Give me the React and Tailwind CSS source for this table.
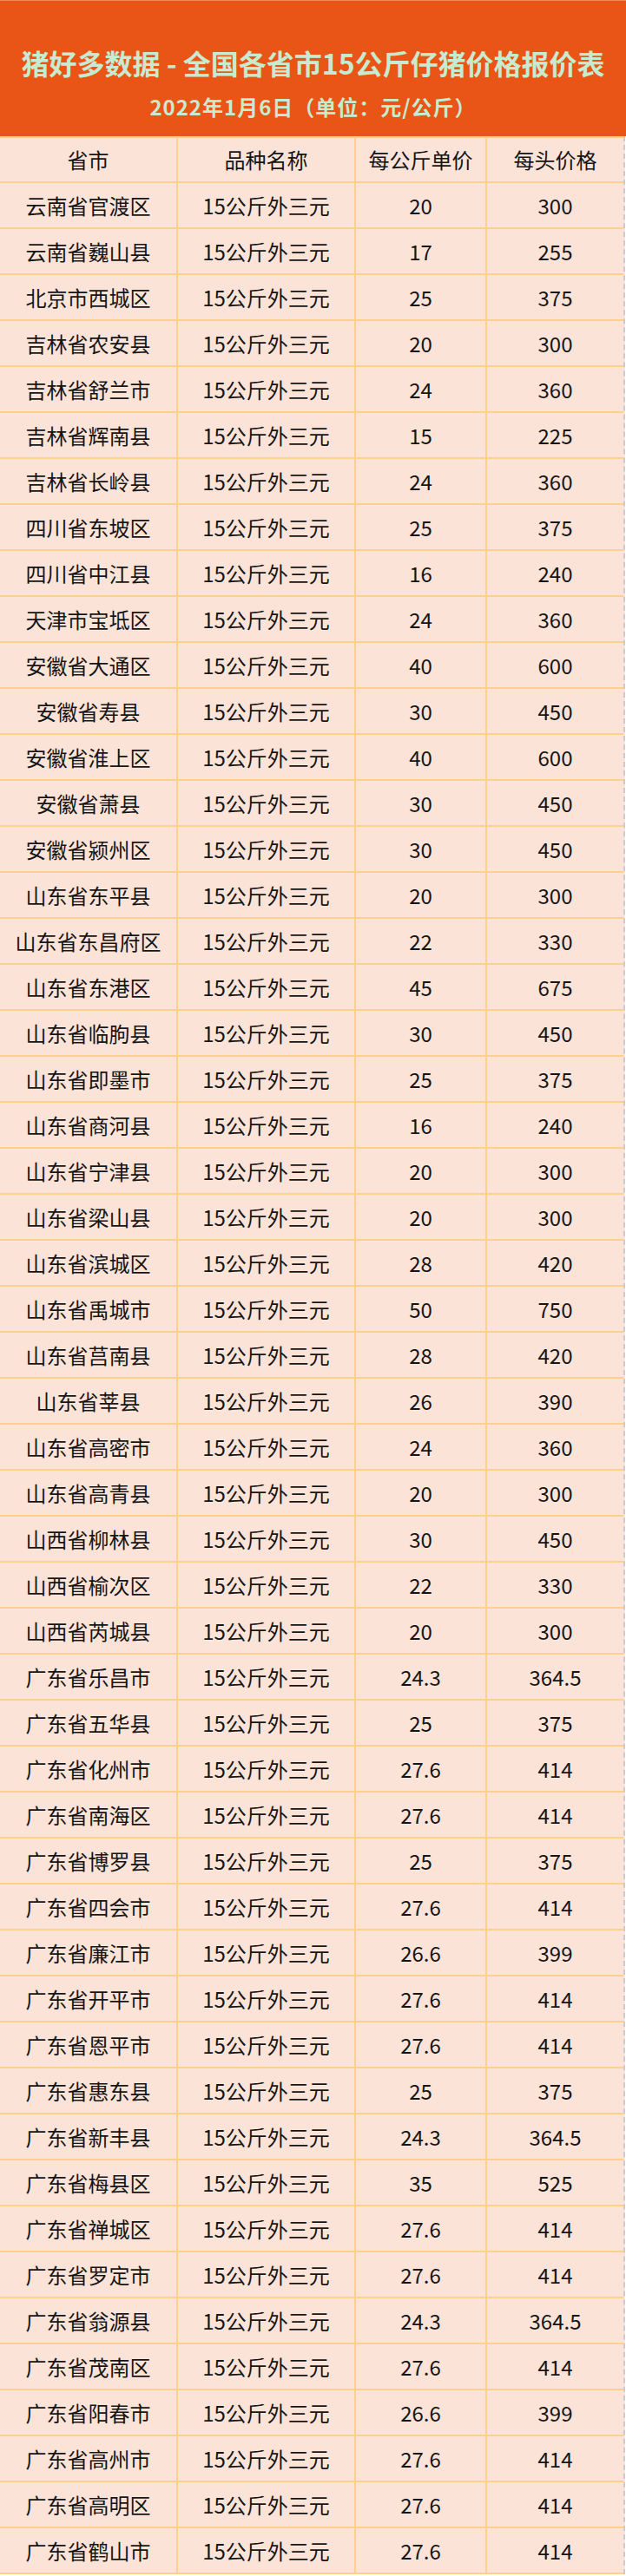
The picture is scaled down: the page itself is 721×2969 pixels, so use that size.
const rows = [
  ['云南省官渡区', '20', '300'],
  ['云南省巍山县', '17', '255'],
  ['北京市西城区', '25', '375'],
  ['吉林省农安县', '20', '300'],
  ['吉林省舒兰市', '24', '360'],
  ['吉林省辉南县', '15', '225'],
  ['吉林省长岭县', '24', '360'],
  ['四川省东坡区', '25', '375'],
  ['四川省中江县', '16', '240'],
  ['天津市宝坻区', '24', '360'],
  ['安徽省大通区', '40', '600'],
  ['安徽省寿县', '30', '450'],
  ['安徽省淮上区', '40', '600'],
  ['安徽省萧县', '30', '450'],
  ['安徽省颍州区', '30', '450'],
  ['山东省东平县', '20', '300'],
  ['山东省东昌府区', '22', '330'],
  ['山东省东港区', '45', '675'],
  ['山东省临朐县', '30', '450'],
  ['山东省即墨市', '25', '375'],
  ['山东省商河县', '16', '240'],
  ['山东省宁津县', '20', '300'],
  ['山东省梁山县', '20', '300'],
  ['山东省滨城区', '28', '420'],
  ['山东省禹城市', '50', '750'],
  ['山东省莒南县', '28', '420'],
  ['山东省莘县', '26', '390'],
  ['山东省高密市', '24', '360'],
  ['山东省高青县', '20', '300'],
  ['山西省柳林县', '30', '450'],
  ['山西省榆次区', '22', '330'],
  ['山西省芮城县', '20', '300'],
  ['广东省乐昌市', '24.3', '364.5'],
  ['广东省五华县', '25', '375'],
  ['广东省化州市', '27.6', '414'],
  ['广东省南海区', '27.6', '414'],
  ['广东省博罗县', '25', '375'],
  ['广东省四会市', '27.6', '414'],
  ['广东省廉江市', '26.6', '399'],
  ['广东省开平市', '27.6', '414'],
  ['广东省恩平市', '27.6', '414'],
  ['广东省惠东县', '25', '375'],
  ['广东省新丰县', '24.3', '364.5'],
  ['广东省梅县区', '35', '525'],
  ['广东省禅城区', '27.6', '414'],
  ['广东省罗定市', '27.6', '414'],
  ['广东省翁源县', '24.3', '364.5'],
  ['广东省茂南区', '27.6', '414'],
  ['广东省阳春市', '26.6', '399'],
  ['广东省高州市', '27.6', '414'],
  ['广东省高明区', '27.6', '414'],
  ['广东省鹤山市', '27.6', '414'],
];

const FONT = "font-['Noto_Sans_CJK_SC','Noto_Sans',sans-serif]";

function Row({ cells, header = false }) {
  return (
    <div
      className={`grid grid-cols-[205px_205px_151px_157px] border-b-2 border-[#fdd08c] ${
        header ? 'h-[54px] border-t-2' : 'h-[53px]'
      }`}
    >
      {cells.map((text, i) => (
        <div
          key={i}
          className={`flex items-center justify-center text-[24px] leading-none text-[#151515] ${
            i < 3 ? 'border-r-2 border-[#fdd08c]' : ''
          }`}
        >
          {text}
        </div>
      ))}
    </div>
  );
}

export default function App() {
  return (
    <div className={`w-[721px] bg-white ${FONT}`}>
      <div className="h-[157px] bg-[#e85516] border-t border-[#f08a5c] flex flex-col items-center pt-[51px]">
        <h1 className="text-[32px] leading-[40px] font-bold text-[#c8ead0]">
          猪好多数据 - 全国各省市15公斤仔猪价格报价表
        </h1>
        <p className="mt-[16px] text-[24px] leading-[30px] font-bold tracking-[1px] text-[#c8ead0]">
          2022年1月6日（单位：元/公斤）
        </p>
      </div>
      <div className="w-[720px] bg-[#fbe3d8] border-r-2 border-dashed border-[#c9ccd3]">
        <Row header cells={['省市', '品种名称', '每公斤单价', '每头价格']} />
        {rows.map(([city, unit, head]) => (
          <Row key={city} cells={[city, '15公斤外三元', unit, head]} />
        ))}
      </div>
    </div>
  );
}
